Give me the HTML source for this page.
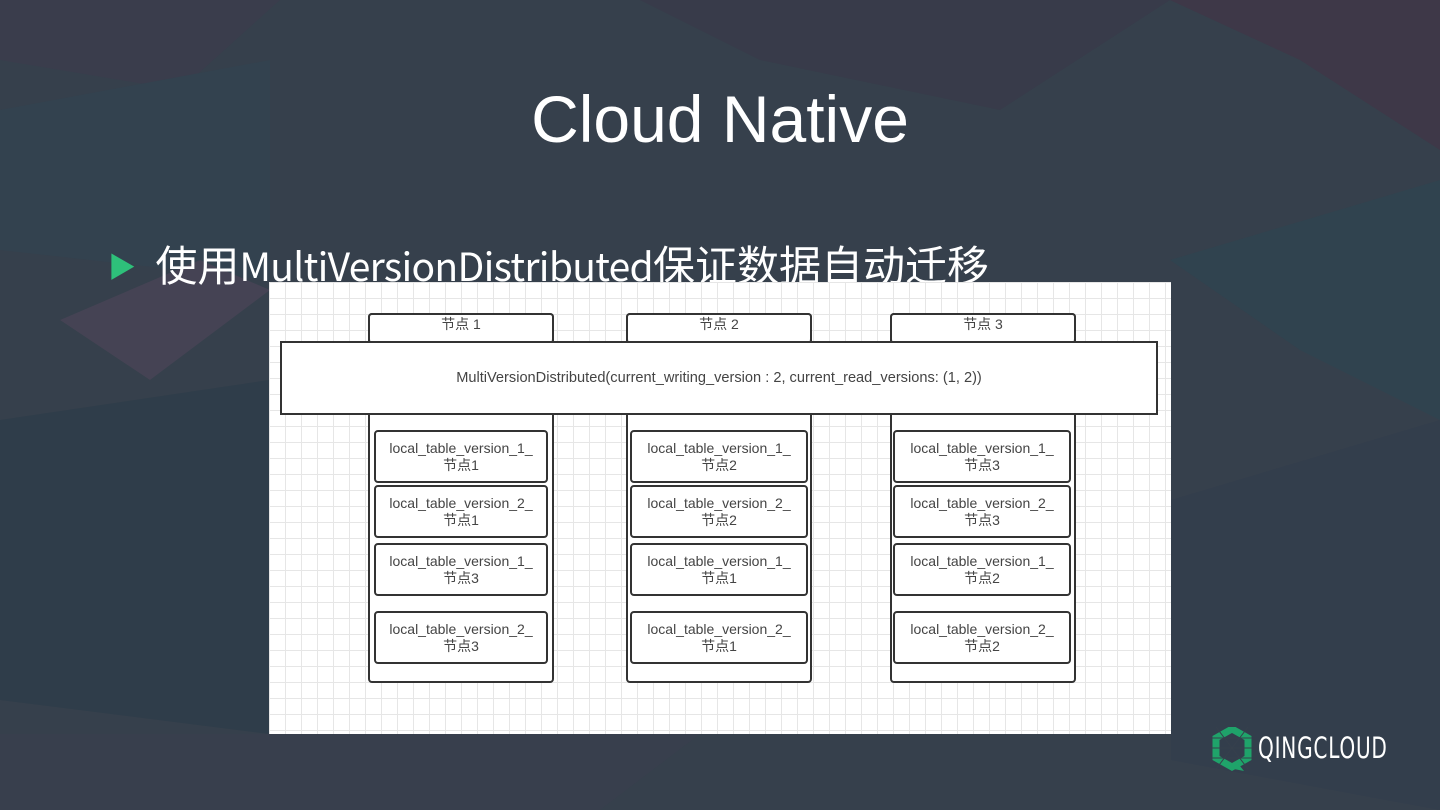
<!DOCTYPE html>
<html><head><meta charset="utf-8"><style>
body{margin:0;width:1440px;height:810px;overflow:hidden;background:#36404c;position:relative;font-family:"Liberation Sans","Noto Sans CJK SC",sans-serif}
svg.bg{position:absolute;left:0;top:0}
h1{position:absolute;left:0;width:1440px;top:81px;margin:0;text-align:center;color:#fff;font-weight:normal;font-size:66px}
.bul{position:absolute;left:108px;top:233px;color:#fff;font-size:39px;white-space:nowrap;letter-spacing:-0.7px;font-family:"Noto Sans CJK SC",sans-serif}
.bul i{font-style:normal;font-size:42px;letter-spacing:0}
.bul b{color:#2ec07a;font-size:28px;font-weight:normal;margin-right:20px;vertical-align:4px}
.diag{position:absolute;left:269px;top:282px;width:902px;height:452px;background-color:#fff;background-image:linear-gradient(#e6e6e6 1px,transparent 1px),linear-gradient(90deg,#e6e6e6 1px,transparent 1px);background-size:16px 16px}
.b{position:absolute;box-sizing:border-box;border:2px solid #333;border-radius:4px;background:#fff;font-size:14px;color:#444;text-align:center;line-height:17px}
.hd{padding-top:1px}
.in{display:flex;align-items:center;justify-content:center}
.logo{position:absolute;left:1258px;top:731px;color:#fff;font-size:29px;letter-spacing:1px;font-family:"DejaVu Sans Condensed","Liberation Sans",sans-serif;transform:scaleX(.77);transform-origin:left}
</style></head><body>
<svg class="bg" width="1440" height="810">
<polygon points="0,0 280,0 180,90 0,60" fill="#3a3d4c"/>
<polygon points="640,0 1170,0 1000,110 760,60" fill="#383b4a"/>
<polygon points="1170,0 1440,0 1440,150 1300,60" fill="#3e3848"/>
<polygon points="0,110 270,60 270,280 0,250" fill="#33424f"/>
<polygon points="60,320 200,260 270,290 150,380" fill="#454354"/>
<polygon points="1170,260 1440,180 1440,420 1300,350" fill="#30434f"/>
<polygon points="0,420 269,380 269,734 0,700" fill="#2f3d4a"/>
<polygon points="1171,500 1440,420 1440,810 1171,760" fill="#333e4c"/>
<polygon points="0,734 700,734 600,810 0,810" fill="#383f4d"/>
</svg>
<h1>Cloud Native</h1>
<div class="bul"><b>▶</b><i>使用</i>MultiVersionDistributed<i>保证数据自动迁移</i></div>
<div class="diag">
<div class="b" style="left:99px;top:31px;width:186px;height:370px"></div>
<div class="b" style="left:357px;top:31px;width:186px;height:370px"></div>
<div class="b" style="left:621px;top:31px;width:186px;height:370px"></div>
<div class="b hd" style="left:99px;top:31px;width:186px;height:30px;border-bottom:none">节点 1</div>
<div class="b hd" style="left:357px;top:31px;width:186px;height:30px;border-bottom:none">节点 2</div>
<div class="b hd" style="left:621px;top:31px;width:186px;height:30px;border-bottom:none">节点 3</div>
<div class="b in" style="left:11px;top:59px;width:878px;height:74px;border-radius:0;font-size:14.6px">MultiVersionDistributed(current_writing_version : 2, current_read_versions: (1, 2))</div>

<div class="b in" style="left:105px;top:148px;width:174px;height:53px">local_table_version_1_<br>节点1</div>
<div class="b in" style="left:105px;top:203px;width:174px;height:53px">local_table_version_2_<br>节点1</div>
<div class="b in" style="left:105px;top:261px;width:174px;height:53px">local_table_version_1_<br>节点3</div>
<div class="b in" style="left:105px;top:329px;width:174px;height:53px">local_table_version_2_<br>节点3</div>

<div class="b in" style="left:361px;top:148px;width:178px;height:53px">local_table_version_1_<br>节点2</div>
<div class="b in" style="left:361px;top:203px;width:178px;height:53px">local_table_version_2_<br>节点2</div>
<div class="b in" style="left:361px;top:261px;width:178px;height:53px">local_table_version_1_<br>节点1</div>
<div class="b in" style="left:361px;top:329px;width:178px;height:53px">local_table_version_2_<br>节点1</div>

<div class="b in" style="left:624px;top:148px;width:178px;height:53px">local_table_version_1_<br>节点3</div>
<div class="b in" style="left:624px;top:203px;width:178px;height:53px">local_table_version_2_<br>节点3</div>
<div class="b in" style="left:624px;top:261px;width:178px;height:53px">local_table_version_1_<br>节点2</div>
<div class="b in" style="left:624px;top:329px;width:178px;height:53px">local_table_version_2_<br>节点2</div>
</div>
<svg style="position:absolute;left:1212px;top:727px" width="40" height="46" viewBox="0 0 40 46">
<polygon points="20,2 36,11 36,31 20,40 4,31 4,11" fill="none" stroke="#1fa36a" stroke-width="7"/>
<polygon points="24,34 32,44 22,42" fill="#1fa36a"/>
<g stroke="#36404c" stroke-width="1"><line x1="0" y1="11" x2="40" y2="11"/><line x1="0" y1="21" x2="40" y2="21"/><line x1="0" y1="31" x2="40" y2="31"/><line x1="4" y1="0" x2="36" y2="42"/><line x1="36" y1="0" x2="4" y2="42"/></g>
</svg>
<div class="logo">QINGCLOUD</div>
</body></html>
